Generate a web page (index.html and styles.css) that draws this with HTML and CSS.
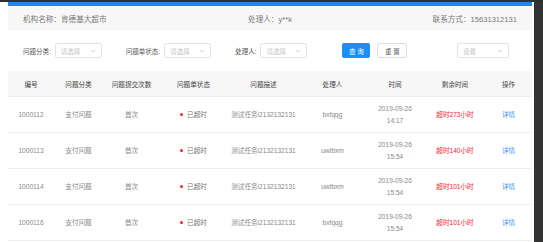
FILE: index.html
```html
<!DOCTYPE html>
<html lang="zh-CN">
<head>
    <meta charset="UTF-8">
    <meta name="viewport" content="width=device-width, initial-scale=1.0">
    <title>问题单列表</title>
    <link rel="stylesheet" href="styles.css">
</head>
<body>
    <div class="topbar"></div>
    <div class="frame">
        <div class="page">
            <div class="accent"></div>

            <div class="info">
                <span>机构名称：肯德基大超市</span>
                <span class="info-mid">处理人：y**k</span>
                <span class="info-end">联系方式：15631312131</span>
            </div>

            <div class="filters">
                <label class="field">问题分类:
                    <span class="select">请选择<svg viewBox="0 0 8 5"><polyline points="1,1 4,4 7,1"/></svg></span>
                </label>
                <label class="field">问题单状态:
                    <span class="select">请选择<svg viewBox="0 0 8 5"><polyline points="1,1 4,4 7,1"/></svg></span>
                </label>
                <label class="field">处理人:
                    <span class="select">请选择<svg viewBox="0 0 8 5"><polyline points="1,1 4,4 7,1"/></svg></span>
                </label>
                <button class="btn btn-primary" type="button">查 询</button>
                <button class="btn" type="button">重 置</button>
                <span class="select select-wide">设置<svg viewBox="0 0 8 5"><polyline points="1,1 4,4 7,1"/></svg></span>
            </div>

            <table class="grid">
                <colgroup>
                    <col style="width:46px">
                    <col style="width:49px">
                    <col style="width:57px">
                    <col style="width:67px">
                    <col style="width:73px">
                    <col style="width:65px">
                    <col style="width:60px">
                    <col style="width:60px">
                    <col style="width:47px">
                </colgroup>
                <thead>
                    <tr>
                        <th>编号</th>
                        <th>问题分类</th>
                        <th>问题提交次数</th>
                        <th>问题单状态</th>
                        <th>问题描述</th>
                        <th>处理人</th>
                        <th>时间</th>
                        <th>剩余时间</th>
                        <th>操作</th>
                    </tr>
                </thead>
                <tbody>
                    <tr>
                        <td>1000112</td>
                        <td>支付问题</td>
                        <td>首次</td>
                        <td><span class="status">已超时</span></td>
                        <td>测试任务i2132132131</td>
                        <td>bxfqqg</td>
                        <td>2019-09-26<br>14:17</td>
                        <td class="late">超时273小时</td>
                        <td><a class="link" href="#">详情</a></td>
                    </tr>
                    <tr>
                        <td>1000113</td>
                        <td>支付问题</td>
                        <td>首次</td>
                        <td><span class="status">已超时</span></td>
                        <td>测试任务i2132132131</td>
                        <td>uwtbxm</td>
                        <td>2019-09-26<br>15:54</td>
                        <td class="late">超时140小时</td>
                        <td><a class="link" href="#">详情</a></td>
                    </tr>
                    <tr>
                        <td>1000114</td>
                        <td>支付问题</td>
                        <td>首次</td>
                        <td><span class="status">已超时</span></td>
                        <td>测试任务i2132132131</td>
                        <td>uwtbxm</td>
                        <td>2019-09-26<br>15:54</td>
                        <td class="late">超时101小时</td>
                        <td><a class="link" href="#">详情</a></td>
                    </tr>
                    <tr>
                        <td>1000116</td>
                        <td>支付问题</td>
                        <td>首次</td>
                        <td><span class="status">已超时</span></td>
                        <td>测试任务i2132132131</td>
                        <td>bxfqqg</td>
                        <td>2019-09-26<br>15:54</td>
                        <td class="late">超时101小时</td>
                        <td><a class="link" href="#">详情</a></td>
                    </tr>
                </tbody>
            </table>
        </div>
        <div class="scroll"></div>
    </div>
</body>
</html>
```

FILE: styles.css
```css
html, body {
    margin: 0;
    padding: 0;
    height: 100%;
    overflow: hidden;
}
body {
    font-family: "Liberation Sans", "Noto Sans CJK SC", sans-serif;
    color: #666;
    background: #fff;
}
.topbar {
    height: 2px;
    background: #2f2f2f;
}
.frame {
    display: flex;
    height: 240px;
}
.page {
    width: 524px;
    padding: 0 2px 0 8px;
    background: #fff;
}
.scroll {
    flex: 1;
    background: #333;
}
.accent {
    height: 4px;
    background: #1e88f0;
}
.info {
    height: 24px;
    display: grid;
    grid-template-columns: 1fr auto 1fr;
    align-items: center;
    padding: 0 15px;
    background: #f7f7f7;
    font-size: 7.6px;
    color: #777;
}
.info-end {
    text-align: right;
}
.filters {
    display: flex;
    align-items: center;
    height: 15px;
    padding: 13px 23px 13px 15px;
    font-size: 6.5px;
    color: #555;
}
.field {
    display: flex;
    align-items: center;
    gap: 4px;
    margin-right: 24px;
}
.field:nth-child(3) {
    margin-right: 35px;
}
.select {
    display: flex;
    align-items: center;
    justify-content: space-between;
    box-sizing: border-box;
    width: 47px;
    height: 15px;
    padding: 0 5px;
    border: 1px solid #e3e3e3;
    border-radius: 2px;
    color: #c4c4c4;
    font-size: 6.5px;
    background: #fff;
}
.select svg {
    width: 6px;
    height: 4px;
    fill: none;
    stroke: #c4c4c4;
    stroke-width: 1;
}
.select-wide {
    width: 52px;
    margin-left: auto;
}
.btn {
    box-sizing: border-box;
    height: 15px;
    width: 30px;
    padding: 0;
    margin-right: 7px;
    border: 1px solid #ddd;
    border-radius: 2px;
    background: #fff;
    color: #555;
    font-family: inherit;
    font-size: 6.5px;
}
.btn-primary {
    width: 28px;
    border-color: #1890ff;
    background: #1890ff;
    color: #fff;
}
.grid {
    width: 524px;
    border-collapse: collapse;
    table-layout: fixed;
    font-size: 6.6px;
    text-align: center;
}
.grid th {
    height: 25px;
    padding: 0;
    background: #f7f7f7;
    color: #444;
    font-weight: normal;
    border-bottom: 1px solid #eee;
}
.grid td {
    height: 35px;
    padding: 0;
    color: #888;
    line-height: 12px;
    border-bottom: 1px solid #eee;
}
.status::before {
    content: "";
    display: inline-block;
    width: 3px;
    height: 3px;
    margin-right: 4px;
    border-radius: 50%;
    background: #f5222d;
    vertical-align: 1px;
}
.status {
    color: #777;
}
.grid td.late {
    color: #f5222d;
}
.link {
    color: #3a8ef6;
    text-decoration: none;
}
```
